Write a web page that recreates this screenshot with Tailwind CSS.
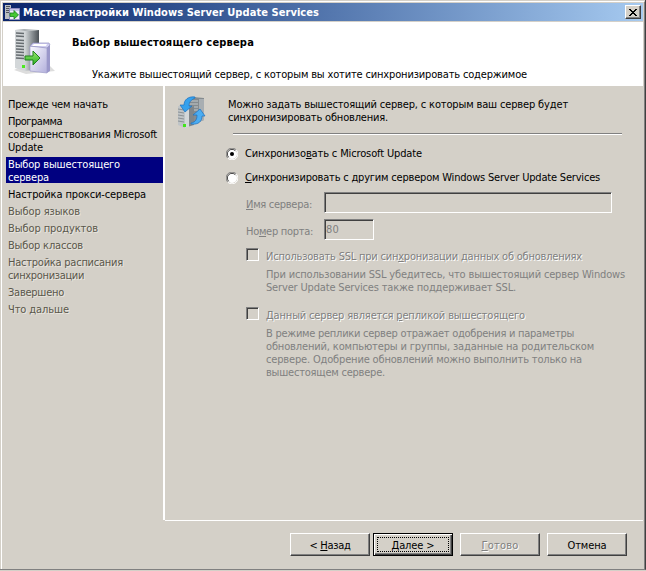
<!DOCTYPE html>
<html lang="ru">
<head>
<meta charset="utf-8">
<title>Мастер настройки Windows Server Update Services</title>
<script src="https://cdn.jsdelivr.net/npm/@tailwindcss/browser@4"></script>
</head>
<body class="w-[646px] h-[571px] overflow-hidden bg-[#d4d0c8] text-black text-[11px] leading-[13px] font-['DejaVu_Sans_Condensed','DejaVu_Sans',sans-serif] [font-stretch:condensed] whitespace-nowrap">
<div class="w-[646px] h-[570px] pt-px pl-px border-r border-b border-r-[#404040] border-b-[#808080]">
<div class="h-full border-l border-t border-r border-l-white border-t-white border-r-[#808080] pl-px pt-px pr-px flex flex-col">

  <header class="h-[18px] shrink-0 flex items-center bg-linear-to-r from-[#0a246a] to-[#a6caf0] pl-[2px] pr-[2px]">
    <svg class="w-4 h-4 shrink-0" viewBox="0 0 16 16">
      <path d="M0 1h6v14H0z" fill="#b9bdc2"/><path d="M1 2h4v1H1zM1 4h4v1H1zM1 6h4v1H1zM1 8h4v1H1z" fill="#50555c"/>
      <path d="M4.500 4.500h10v11h-10z" fill="#eeeefa" stroke="#8f8cc0"/><path d="M5 5h9v2H5z" fill="#c7c5e8"/>
      <path d="M5 9h4V6.500L13.500 11 9 15v-2.500H5z" fill="#45c832" stroke="#17801a" stroke-width=".8"/>
    </svg>
    <span data-w="296" class="ml-[2px] font-bold text-white">Мастер настройки Windows Server Update Services</span>
    <button class="ml-auto w-4 h-[14px] bg-[#d4d0c8] border border-t-white border-l-white border-r-[#404040] border-b-[#404040] shadow-[inset_-1px_-1px_#808080] flex items-center justify-center">
      <svg class="w-2 h-[7px]" viewBox="0 0 8 7" shape-rendering="crispEdges"><path d="M0 0h2v1h1v1h2V1h1V0h2v1H7v1H6v1H5v1h1v1h1v1h1v1H6V6H5V5H3v1H2v1H0V6h1V5h1V4h1V3H2V2H1V1H0z"/></svg>
    </button>
  </header>

  <section class="mt-px h-[64px] shrink-0 bg-white flex pl-[9px]">
    <svg class="w-[46px] h-[50px] mt-[5px] shrink-0" viewBox="0 0 46 50">
      <defs>
        <linearGradient id="tower"><stop offset="0" stop-color="#d2d6d8"/><stop offset=".5" stop-color="#8b9195"/><stop offset="1" stop-color="#4c5257"/></linearGradient>
        <linearGradient id="carton" x2="1" y2="1"><stop offset="0" stop-color="#fafaff"/><stop offset="1" stop-color="#b3b0dc"/></linearGradient>
        <linearGradient id="arrow" x2="0" y2="1"><stop offset="0" stop-color="#9bea70"/><stop offset="1" stop-color="#27ad22"/></linearGradient>
      </defs>
      <path d="M2 43l12 4 29-3-6-6-20-2z" fill="#ddd"/>
      <path d="M3 3l10 1v40L3 41z" fill="#d3d7d9"/>
      <path d="M13 4l14-1v39l-14 2z" fill="url(#tower)"/>
      <path d="M3 3l9-1 15 1-14 1z" fill="#a9afb2"/>
      <path d="M4 6l8 .5M4 9l8 .5M4 13l8 .5M4 16l8 .5M4 19l8 .5M4 22l8 .5M4 25l8 .5M4 28l8 .5M4 31l8 .5" stroke="#666c70" stroke-width="1.300"/>
      <path d="M10 38h3v3h-3z" fill="#4bea20"/>
      <path d="M18 19l17 1v26l-17-2z" fill="url(#carton)" stroke="#9e9cc8" stroke-width=".7"/>
      <path d="M35 20l3-2v26l-3 2z" fill="#9b98ca"/>
      <path d="M18 19l3-3h16l1 2-3 3z" fill="#cfcdf0" stroke="#9492c0" stroke-width=".7"/>
      <path d="M20 19l2-2h13l-1 2z" fill="#fff"/>
      <path d="M13 29h8v-5l7 7-7 7v-5h-8z" fill="url(#arrow)" stroke="#20811c"/>
    </svg>
    <div class="pl-[14px] pt-[14px]">
      <h1><span data-w="182" class="font-bold">Выбор вышестоящего сервера</span></h1>
      <p class="mt-[19px] ml-5"><span data-w="435">Укажите вышестоящий сервер, с которым вы хотите синхронизировать содержимое</span></p>
    </div>
  </section>

  <div class="h-[434px] shrink-0 flex">
    <nav class="w-[162px] shrink-0 border-r-2 border-white pt-3 pl-[3px] flex flex-col gap-1 text-[#5a574b]">
      <div class="pl-[2px] text-black"><span data-w="100">Прежде чем начать</span></div>
      <div class="pl-[2px] text-black"><span data-w="54">Программа</span><br><span data-w="149">совершенствования Microsoft</span><br><span data-w="35">Update</span></div>
      <div class="-mt-px mb-px h-[26px] pl-[2px] pt-px bg-[#000080] text-white"><span data-w="112">Выбор вышестоящего</span><br><span data-w="41">сервера</span></div>
      <div class="pl-[2px] text-black"><span data-w="138">Настройка прокси-сервера</span></div>
      <div class="pl-[2px] [text-shadow:1px_1px_#e9e6df]"><span data-w="72">Выбор языков</span></div>
      <div class="pl-[2px] [text-shadow:1px_1px_#e9e6df]"><span data-w="90">Выбор продуктов</span></div>
      <div class="pl-[2px] [text-shadow:1px_1px_#e9e6df]"><span data-w="75">Выбор классов</span></div>
      <div class="pl-[2px] [text-shadow:1px_1px_#e9e6df]"><span data-w="115">Настройка расписания</span><br><span data-w="76">синхронизации</span></div>
      <div class="pl-[2px] [text-shadow:1px_1px_#e9e6df]"><span data-w="56">Завершено</span></div>
      <div class="pl-[2px] [text-shadow:1px_1px_#e9e6df]"><span data-w="61">Что дальше</span></div>
    </nav>

    <main class="grow pt-[10px] pl-[12px]">
      <div class="flex h-[37px]">
        <svg class="w-[30px] h-[33px] shrink-0" viewBox="0 0 30 33">
          <path d="M10 3l6-2 11 1v22l-8 3-9-3z" fill="#858b8f"/><path d="M22 3h5v21l-5 2z" fill="#a8aeb2"/><path d="M12 5h9M12 8h9M14 11h7M16 14h5" stroke="#c4c9cc" stroke-width="1.200"/>
          <path d="M1 10l7 1v21l-7-3z" fill="#bfc4c7"/><path d="M8 11l9-1v19l-9 3z" fill="#d3d7d9"/><path d="M12 10.500l5-.5v19l-5 1.500z" fill="#80868a"/>
          <path d="M1 13l6 1M1 16l6 1M1 19l6 1M1 22l6 1M1 25l6 1" stroke="#8a9094"/><path d="M6 28h3v3H6z" fill="#42e51b"/>
          <path d="M18 1C11 0 7 4 7 9H3l5 7 7-6h-3c0-4 2-6 6-8z" fill="#35a1ed" stroke="#1c70bd" stroke-width=".7"/>
          <path d="M14 28c8 1 11-3 11-8h3l-5-7-7 6h4c0 4-1 7-6 8z" fill="#4badf2" stroke="#1c70bd" stroke-width=".7"/>
        </svg>
        <p class="pl-[21px] pt-[2px]"><span data-w="340">Можно задать вышестоящий сервер, с которым ваш сервер будет</span><br><span data-w="160">синхронизировать обновления.</span></p>
      </div>
      <div class="ml-[56px] w-[389px] h-[2px] border-t border-b border-t-[#808080] border-b-white"></div>

      <div class="pl-[49px] pt-[12px] flex flex-col">
        <label class="flex items-center h-[13px]"><svg class="w-3 h-3 mr-[7px] shrink-0" viewBox="0 0 12 12"><circle cx="6" cy="6" r="5" fill="#fff"/><path d="M1.800 10.200A5.500 5.500 0 0 1 10.200 1.800" fill="none" stroke="#808080"/><path d="M2.700 9.300A4.500 4.500 0 0 1 9.300 2.700" fill="none" stroke="#404040"/><path d="M10.200 1.800A5.500 5.500 0 0 1 1.800 10.200" fill="none" stroke="#fff"/><circle cx="6" cy="6" r="2"/></svg><span data-w="177">Синхронизо<u>в</u>ать с Microsoft Update</span></label>
        <label class="flex items-center h-[13px] mt-[11px]"><svg class="w-3 h-3 mr-[7px] shrink-0" viewBox="0 0 12 12"><circle cx="6" cy="6" r="5" fill="#fff"/><path d="M1.800 10.200A5.500 5.500 0 0 1 10.200 1.800" fill="none" stroke="#808080"/><path d="M2.700 9.300A4.500 4.500 0 0 1 9.300 2.700" fill="none" stroke="#404040"/><path d="M10.200 1.800A5.500 5.500 0 0 1 1.800 10.200" fill="none" stroke="#fff"/></svg><span data-w="355"><u>С</u>инхронизировать с другим сервером Windows Server Update Services</span></label>
      </div>

      <div class="pl-[69px] text-[#808080]">
        <div class="flex mt-[8px] h-[21px]">
          <div class="w-[78px] pt-[6px]"><span data-w="66"><u>И</u>мя сервера:</span></div>
          <div class="w-[288px] border border-t-[#808080] border-l-[#808080] border-r-white border-b-white shadow-[inset_1px_1px_#404040]"></div>
        </div>
        <div class="flex mt-[6px] h-[21px]">
          <div class="w-[78px] pt-[6px]"><span data-w="67">Но<u>м</u>ер порта:</span></div>
          <div class="w-[50px] pl-px pt-[3px] border border-t-[#808080] border-l-[#808080] border-r-white border-b-white shadow-[inset_1px_1px_#404040]"><span data-w="13">80</span></div>
        </div>
        <label class="flex mt-2 h-[13px]"><i class="w-[13px] h-[13px] mr-[7px] border border-t-[#808080] border-l-[#808080] border-r-white border-b-white shadow-[inset_1px_1px_#404040]"></i><span data-w="316" class="pt-[2px] [text-shadow:1px_1px_#fff]">Использовать SSL при син<u>х</u>ронизации данных об обновлениях</span></label>
        <p class="pl-5 mt-[7px]"><span data-w="359">При использовании SSL убедитесь, что вышестоящий сервер Windows</span><br><span data-w="250">Server Update Services также поддерживает SSL.</span></p>
        <label class="flex mt-[13px] h-[13px]"><i class="w-[13px] h-[13px] mr-[7px] border border-t-[#808080] border-l-[#808080] border-r-white border-b-white shadow-[inset_1px_1px_#404040]"></i><span data-w="259" class="pt-[2px] [text-shadow:1px_1px_#fff]">Данный сервер является <u>р</u>епликой вышестоящего</span></label>
        <p class="pl-5 mt-[7px]"><span data-w="308">В режиме реплики сервер отражает одобрения и параметры</span><br><span data-w="328">обновлений, компьютеры и группы, заданные на родительском</span><br><span data-w="316">сервере. Одобрение обновлений можно выполнить только на</span><br><span data-w="119">вышестоящем сервере.</span></p>
      </div>
    </main>
  </div>

  <footer class="h-[48px] shrink-0 ml-[162px] border-t border-white pt-3 pl-[125px] flex">
    <button class="w-20 h-[23px] pt-px border border-t-white border-l-white border-r-[#404040] border-b-[#404040] shadow-[inset_-1px_-1px_#808080]"><span data-w="41">&lt; <u>Н</u>азад</span></button>
    <button class="relative ml-[3px] w-20 h-[23px] pt-px border border-black shadow-[inset_1px_1px_#fff,inset_-1px_-1px_#404040,inset_-2px_-2px_#808080]"><i class="absolute inset-[3px] border border-dotted border-black"></i><span data-w="43"><u>Д</u>алее &gt;</span></button>
    <button class="ml-[7px] w-20 h-[23px] pt-px border border-t-white border-l-white border-r-[#404040] border-b-[#404040] shadow-[inset_-1px_-1px_#808080] text-[#808080] [text-shadow:1px_1px_#fff]"><span data-w="37"><u>Г</u>отово</span></button>
    <button class="ml-[7px] w-20 h-[23px] pt-px border border-t-white border-l-white border-r-[#404040] border-b-[#404040] shadow-[inset_-1px_-1px_#808080]"><span data-w="39">Отмена</span></button>
  </footer>
</div>
</div>
<script>
function fitLabels() {
  document.querySelectorAll('[data-w]').forEach(function (el) {
    el.style.letterSpacing = '0px';
    var natural = el.getBoundingClientRect().width;
    el.style.letterSpacing = (el.dataset.w - natural) / el.textContent.length + 'px';
  });
}
new ResizeObserver(fitLabels).observe(document.body);
window.addEventListener('load', fitLabels);
document.fonts.ready.then(fitLabels);
</script>
</body>
</html>
